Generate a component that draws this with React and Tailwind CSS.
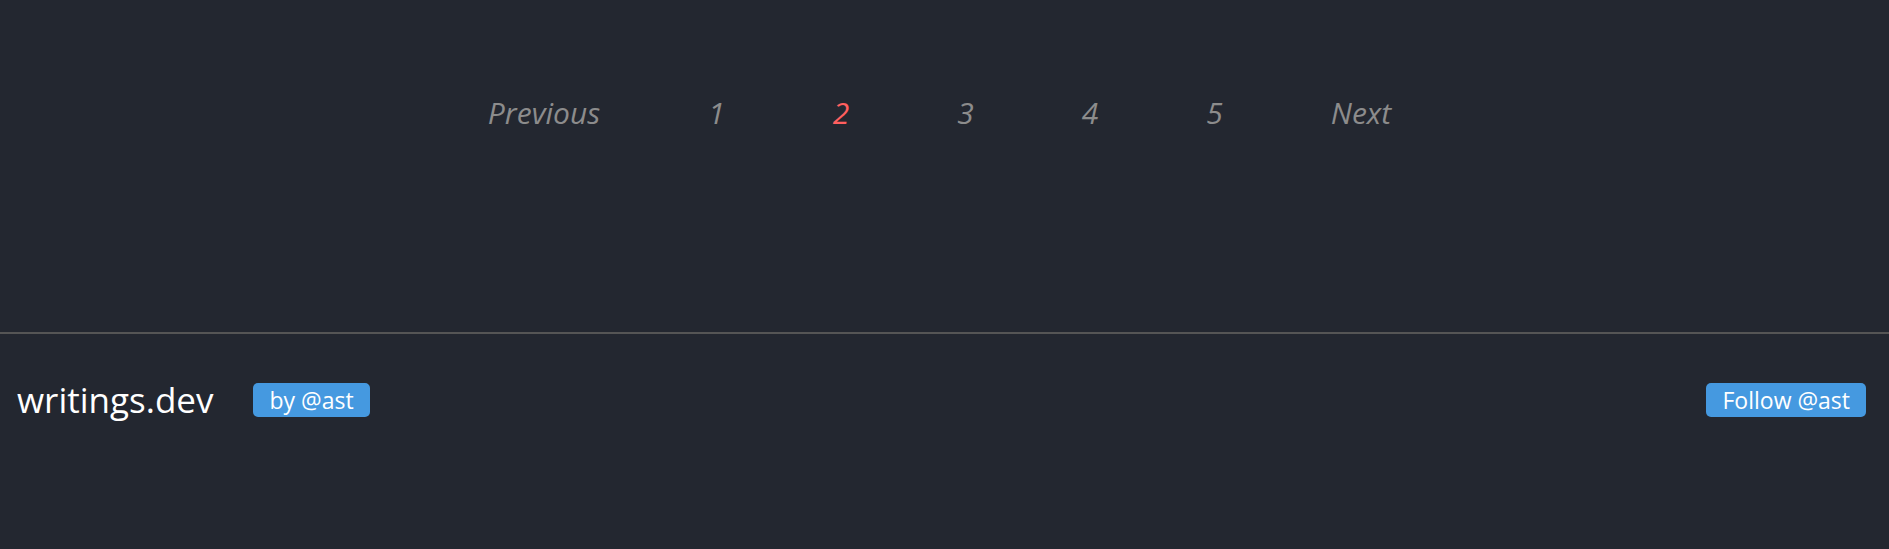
import React from "react";

const pages = ["1", "2", "3", "4", "5"];

export default function App() {
  return (
    <div
      className="min-h-screen w-full bg-[#232730] flex flex-col"
      style={{ fontFamily: '"Open Sans", "Noto Sans", sans-serif' }}
    >
      <nav className="h-[332px] flex justify-center pt-[93px]">
        <ul className="flex items-start gap-[108px] text-[30px] leading-[40px] italic text-[#8c8c8c] h-[40px] mr-[10px]">
          <li>Previous</li>
          {pages.map((p) => (
            <li key={p} className={p === "2" ? "text-[#ff5f5f]" : ""}>
              {p}
            </li>
          ))}
          <li>Next</li>
        </ul>
      </nav>

      <footer className="border-t-2 border-[#555555] flex items-center justify-between px-[17px] pt-[47px]">
        <div className="flex items-center gap-[40px]">
          <span className="text-white text-[35px] leading-[38px]">writings.dev</span>
          <span className="bg-[#4599e0] text-white text-[23px] leading-[34px] px-[16px] rounded-[5px]">
            by @ast
          </span>
        </div>
        <span className="bg-[#4599e0] text-white text-[23px] leading-[34px] px-[16px] rounded-[5px] mr-[6px]">
          Follow @ast
        </span>
      </footer>
    </div>
  );
}
